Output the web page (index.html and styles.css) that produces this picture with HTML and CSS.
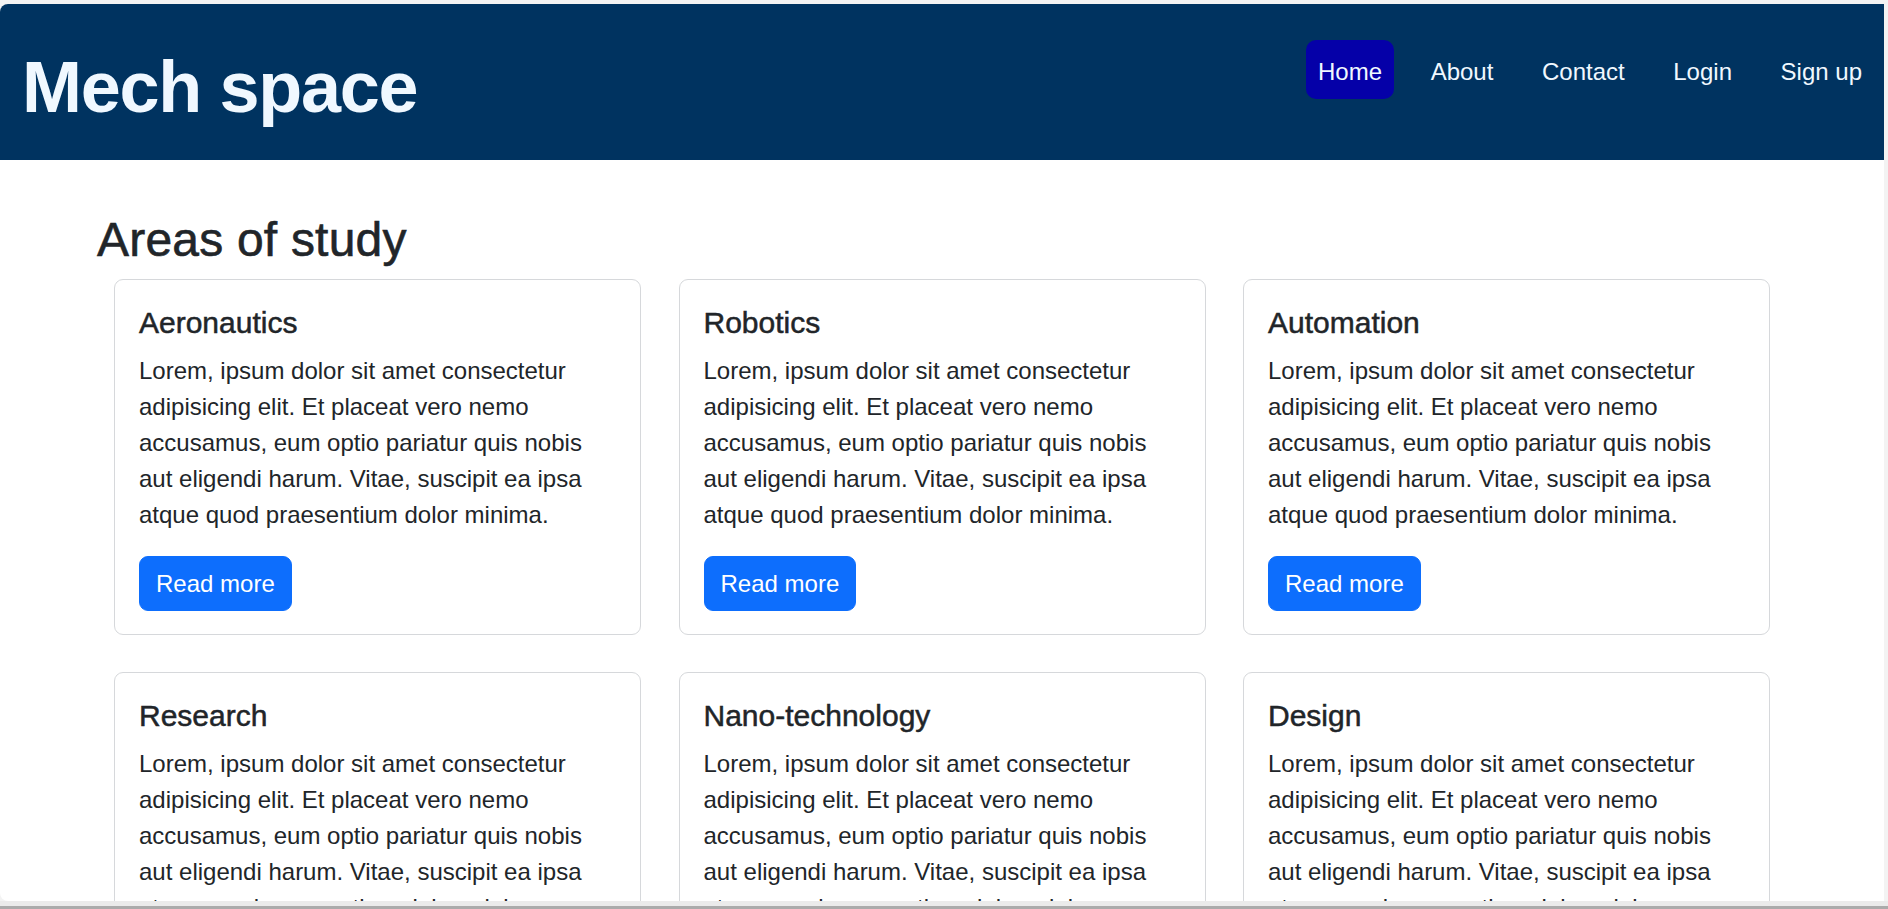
FILE: index.html
```html
<!DOCTYPE html>
<html lang="en">
<head>
<meta charset="utf-8">
<title>Mech space</title>
<link rel="stylesheet" href="styles.css">
</head>
<body>
<div class="window">
  <header class="topbar">
    <h1 class="brand">Mech space</h1>
    <nav class="nav">
      <a class="nav-link active" href="#">Home</a>
      <a class="nav-link" href="#">About</a>
      <a class="nav-link" href="#">Contact</a>
      <a class="nav-link" href="#">Login</a>
      <a class="nav-link" href="#">Sign up</a>
    </nav>
  </header>
  <main class="content">
    <h2 class="section-title">Areas of study</h2>
    <div class="cards">
      <div class="card">
        <h5 class="card-title">Aeronautics</h5>
        <p class="card-text">Lorem, ipsum dolor sit amet consectetur adipisicing elit. Et placeat vero nemo accusamus, eum optio pariatur quis nobis aut eligendi harum. Vitae, suscipit ea ipsa atque quod praesentium dolor minima.</p>
        <a class="btn" href="#">Read more</a>
      </div>
      <div class="card">
        <h5 class="card-title">Robotics</h5>
        <p class="card-text">Lorem, ipsum dolor sit amet consectetur adipisicing elit. Et placeat vero nemo accusamus, eum optio pariatur quis nobis aut eligendi harum. Vitae, suscipit ea ipsa atque quod praesentium dolor minima.</p>
        <a class="btn" href="#">Read more</a>
      </div>
      <div class="card">
        <h5 class="card-title">Automation</h5>
        <p class="card-text">Lorem, ipsum dolor sit amet consectetur adipisicing elit. Et placeat vero nemo accusamus, eum optio pariatur quis nobis aut eligendi harum. Vitae, suscipit ea ipsa atque quod praesentium dolor minima.</p>
        <a class="btn" href="#">Read more</a>
      </div>
      <div class="card">
        <h5 class="card-title">Research</h5>
        <p class="card-text">Lorem, ipsum dolor sit amet consectetur adipisicing elit. Et placeat vero nemo accusamus, eum optio pariatur quis nobis aut eligendi harum. Vitae, suscipit ea ipsa atque quod praesentium dolor minima.</p>
        <a class="btn" href="#">Read more</a>
      </div>
      <div class="card">
        <h5 class="card-title">Nano-technology</h5>
        <p class="card-text">Lorem, ipsum dolor sit amet consectetur adipisicing elit. Et placeat vero nemo accusamus, eum optio pariatur quis nobis aut eligendi harum. Vitae, suscipit ea ipsa atque quod praesentium dolor minima.</p>
        <a class="btn" href="#">Read more</a>
      </div>
      <div class="card">
        <h5 class="card-title">Design</h5>
        <p class="card-text">Lorem, ipsum dolor sit amet consectetur adipisicing elit. Et placeat vero nemo accusamus, eum optio pariatur quis nobis aut eligendi harum. Vitae, suscipit ea ipsa atque quod praesentium dolor minima.</p>
        <a class="btn" href="#">Read more</a>
      </div>
    </div>
  </main>
</div>
<div class="frame-bottom"></div>
</body>
</html>
```

FILE: styles.css
```css
html, body {
  margin: 0;
  padding: 0;
}
body {
  background: #f3f3f3;
  font-family: "Liberation Sans", Arial, sans-serif;
  color: #212529;
  height: 909px;
  overflow: hidden;
  padding-top: 4px;
  box-sizing: border-box;
}
.window {
  width: 1884px;
  height: 897px;
  background: #fff;
  border-radius: 8px 0 0 8px;
  overflow: hidden;
}
.frame-bottom {
  height: 5px;
  background: #ebebeb;
  border-bottom: 3px solid #ababab;
}
.topbar {
  height: 156px;
  background: #003360;
  display: flex;
  justify-content: space-between;
  align-items: flex-start;
  padding: 0 10px 0 22px;
  box-sizing: border-box;
}
.brand {
  margin: 40px 0 0;
  font-size: 72px;
  line-height: 1.2;
  font-weight: 700;
  letter-spacing: -1.3px;
  color: #f0f8ff;
}
.nav {
  display: flex;
  gap: 24.6px;
  margin-top: 36px;
}
.nav-link {
  display: block;
  padding: 14px 12px 10px;
  font-size: 24px;
  line-height: 35px;
  color: #f0f8ff;
  text-decoration: none;
  border-radius: 10px;
}
.nav-link.active {
  background: #0500a8;
}
.content {
  padding: 51px 0 0 97px;
}
.section-title {
  margin: 0 0 10px;
  font-size: 48px;
  line-height: 1.2;
  font-weight: 400;
  letter-spacing: 0.2px;
  -webkit-text-stroke: 0.6px #212529;
}
.cards {
  display: grid;
  grid-template-columns: repeat(3, 527px);
  gap: 37.5px;
  margin-left: 17px;
}
.card {
  border: 1px solid #d6d8db;
  border-radius: 9px;
  padding: 25px 24px 23px;
  display: flex;
  flex-direction: column;
  align-items: flex-start;
}
.card-title {
  margin: 0 0 12px;
  font-size: 30px;
  line-height: 1.2;
  font-weight: 400;
  -webkit-text-stroke: 0.5px #212529;
}
.card-text {
  margin: 0 0 23px;
  font-size: 24px;
  line-height: 36px;
}
.btn {
  display: inline-block;
  background: #0d6efd;
  color: #fff;
  font-size: 24px;
  line-height: 35px;
  padding: 9px 16px;
  border: 1px solid #0d6efd;
  border-radius: 9px;
  text-decoration: none;
}
```
